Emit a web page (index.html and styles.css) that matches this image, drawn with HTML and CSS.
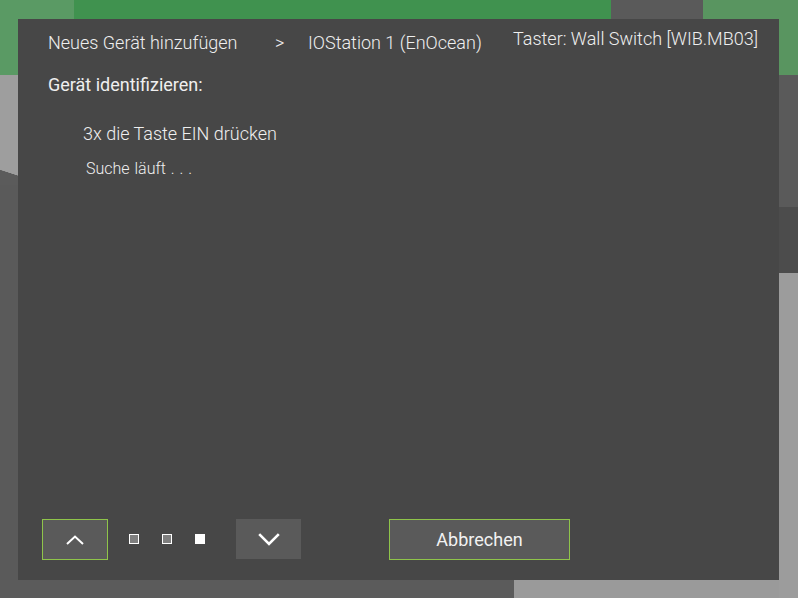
FILE: index.html
```html
<!DOCTYPE html>
<html lang="de">
<head>
<meta charset="utf-8">
<title>Gerät identifizieren</title>
<link rel="stylesheet" href="styles.css">
</head>
<body>
<div class="screen">
  <section class="dialog">
    <header class="crumbs">
      <span class="crumb crumb-first">Neues Gerät hinzufügen</span>
      <span class="crumb crumb-sep">&gt;</span>
      <span class="crumb crumb-station">IOStation 1 (EnOcean)</span>
      <span class="crumb crumb-device">Taster: Wall Switch [WIB.MB03]</span>
    </header>
    <h2 class="title">Gerät identifizieren:</h2>
    <p class="instruction">3x die Taste EIN drücken</p>
    <p class="status">Suche läuft . . .</p>
    <footer class="footer">
      <button class="btn btn-nav btn-active" type="button" aria-label="Zurück">
        <svg width="18" height="10" viewBox="0 0 18 10"><path d="M1 9 L9 1.5 L17 9" fill="none" stroke="#fff" stroke-width="2"/></svg>
      </button>
      <div class="dots">
        <span class="dot"></span>
        <span class="dot"></span>
        <span class="dot dot-on"></span>
      </div>
      <button class="btn btn-nav btn-down" type="button" aria-label="Weiter">
        <svg width="22" height="13" viewBox="0 0 22 13"><path d="M1.2 1.2 L11 11 L20.8 1.2" fill="none" stroke="#fff" stroke-width="2.6"/></svg>
      </button>
      <button class="btn btn-cancel btn-active" type="button">Abbrechen</button>
    </footer>
  </section>
</div>
</body>
</html>
```
FILE: styles.css
```css
html, body {
  margin: 0;
  padding: 0;
}
body {
  width: 798px;
  height: 598px;
  overflow: hidden;
  font-family: Roboto, "Liberation Sans", sans-serif;
}
.screen {
  width: 798px;
  height: 598px;
  padding: 19px 0 0 18px;
  box-sizing: border-box;
  background-color: #5a5a5a;
  background-image:
    linear-gradient(to right, #5a9a64 0 74px, #40924f 74px 611px, #5a5a5a 611px 703px, #599560 703px),
    linear-gradient(to bottom, #5a5a5a 0 132px, #4c4c4c 132px 198px, #9c9c9c 198px),
    linear-gradient(198deg, #9e9e9e 0 95.5px, #5b5b5b 96px),
    linear-gradient(to right, #5b5b5b 0 514px, #9a9a9a 514px);
  background-size: 798px 75px, 19px 523px, 18px 110px, 798px 18px;
  background-position: 0 0, 779px 75px, 0 75px, 0 580px;
  background-repeat: no-repeat;
}
.dialog {
  width: 761px;
  height: 561px;
  background: #474747;
  color: #efefef;
  display: flex;
  flex-direction: column;
  box-sizing: border-box;
  padding: 0 0 20px 0;
}
.crumbs {
  display: flex;
  align-items: flex-start;
  padding: 13px 0 0 30px;
  height: 42px;
  box-sizing: border-box;
}
.crumb {
  font-size: 18px;
  line-height: 21px;
  font-weight: 300;
  white-space: nowrap;
}
.crumb-first { width: 227px; }
.crumb-sep { width: 33px; }
.crumb-station { width: 205px; }
.crumb-device { margin-top: -4px; }
.title {
  margin: 13px 0 0 30px;
  font-size: 18px;
  line-height: 21px;
  font-weight: 400;
}
.instruction {
  margin: 28px 0 0 65px;
  font-size: 18px;
  line-height: 21px;
  font-weight: 300;
}
.status {
  margin: 15px 0 0 68px;
  font-size: 16px;
  line-height: 19px;
  font-weight: 300;
  word-spacing: 1px;
}
.footer {
  margin-top: auto;
  display: flex;
  align-items: flex-start;
  padding-left: 24px;
}
.btn {
  display: flex;
  align-items: center;
  justify-content: center;
  background: #5a5a5a;
  border: 1px solid transparent;
  padding: 0;
  box-sizing: border-box;
  color: #f2f2f2;
  font-family: inherit;
}
.btn-active {
  border-color: #8fc44a;
}
.btn-nav {
  width: 66px;
  height: 41px;
}
.btn-down {
  width: 65px;
  height: 40px;
  border: none;
  margin-left: 31px;
}
.btn-down svg { margin-top: 1px; }
.dots {
  display: flex;
  gap: 23px;
  margin: 15px 0 0 21px;
}
.dot {
  width: 10px;
  height: 10px;
  box-sizing: border-box;
  border: 1px solid #ffffff;
  background: #7f7f7f;
}
.dot-on {
  background: #ffffff;
}
.btn-cancel {
  width: 181px;
  height: 41px;
  margin-left: 88px;
  font-size: 18px;
  font-weight: 400;
}
```
